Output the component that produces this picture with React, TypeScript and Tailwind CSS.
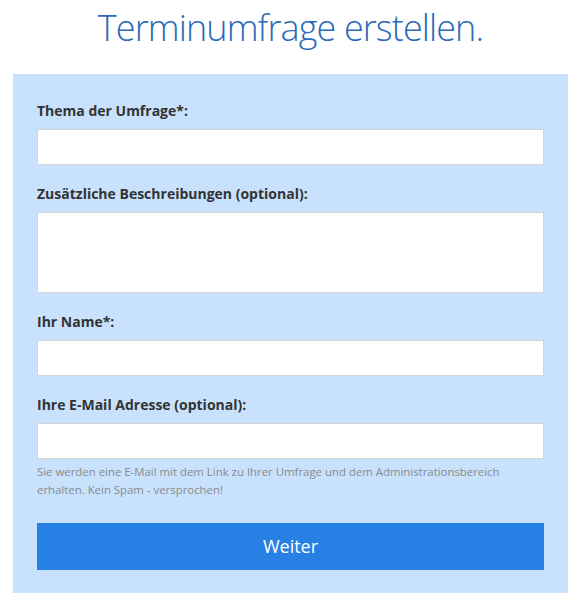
export default function App() {
  const font = { fontFamily: '"Open Sans", "Noto Sans", sans-serif' };
  return (
    <div className="w-[581px] min-h-[603px] bg-white" style={font}>
      <h1 className="pt-[5px] text-center text-[36px] leading-[45px] font-light text-[#2a6ab8] tracking-[-0.9px]">
        Terminumfrage erstellen.
      </h1>
      <form className="mx-[13px] mt-[24px] bg-[#c8e2fd] px-[24px] pt-[27px] pb-[23px]">
        <label className="block text-[14px] leading-[20px] font-bold text-[#333]">
          Thema der Umfrage*:
        </label>
        <input className="mt-[8px] block w-full h-[36px] bg-white border border-[#d4d4d4] outline-none" />

        <label className="mt-[19px] block text-[14px] leading-[20px] font-bold text-[#333]">
          Zusätzliche Beschreibungen (optional):
        </label>
        <textarea className="mt-[8px] block w-full h-[81px] bg-white border border-[#d4d4d4] outline-none resize-none" />

        <label className="mt-[19px] block text-[14px] leading-[20px] font-bold text-[#333]">
          Ihr Name*:
        </label>
        <input className="mt-[8px] block w-full h-[36px] bg-white border border-[#d4d4d4] outline-none" />

        <label className="mt-[19px] block text-[14px] leading-[20px] font-bold text-[#333]">
          Ihre E-Mail Adresse (optional):
        </label>
        <input className="mt-[8px] block w-full h-[36px] bg-white border border-[#d4d4d4] outline-none" />
        <p className="mt-[4px] text-[11.4px] leading-[18px] text-[#8a8a8a]">
          Sie werden eine E-Mail mit dem Link zu Ihrer Umfrage und dem Administrationsbereich erhalten. Kein Spam - versprochen!
        </p>

        <button
          type="button"
          className="mt-[24px] block w-full h-[47px] bg-[#2780e3] text-white text-[18px] leading-[47px]"
        >
          Weiter
        </button>
      </form>
    </div>
  );
}
